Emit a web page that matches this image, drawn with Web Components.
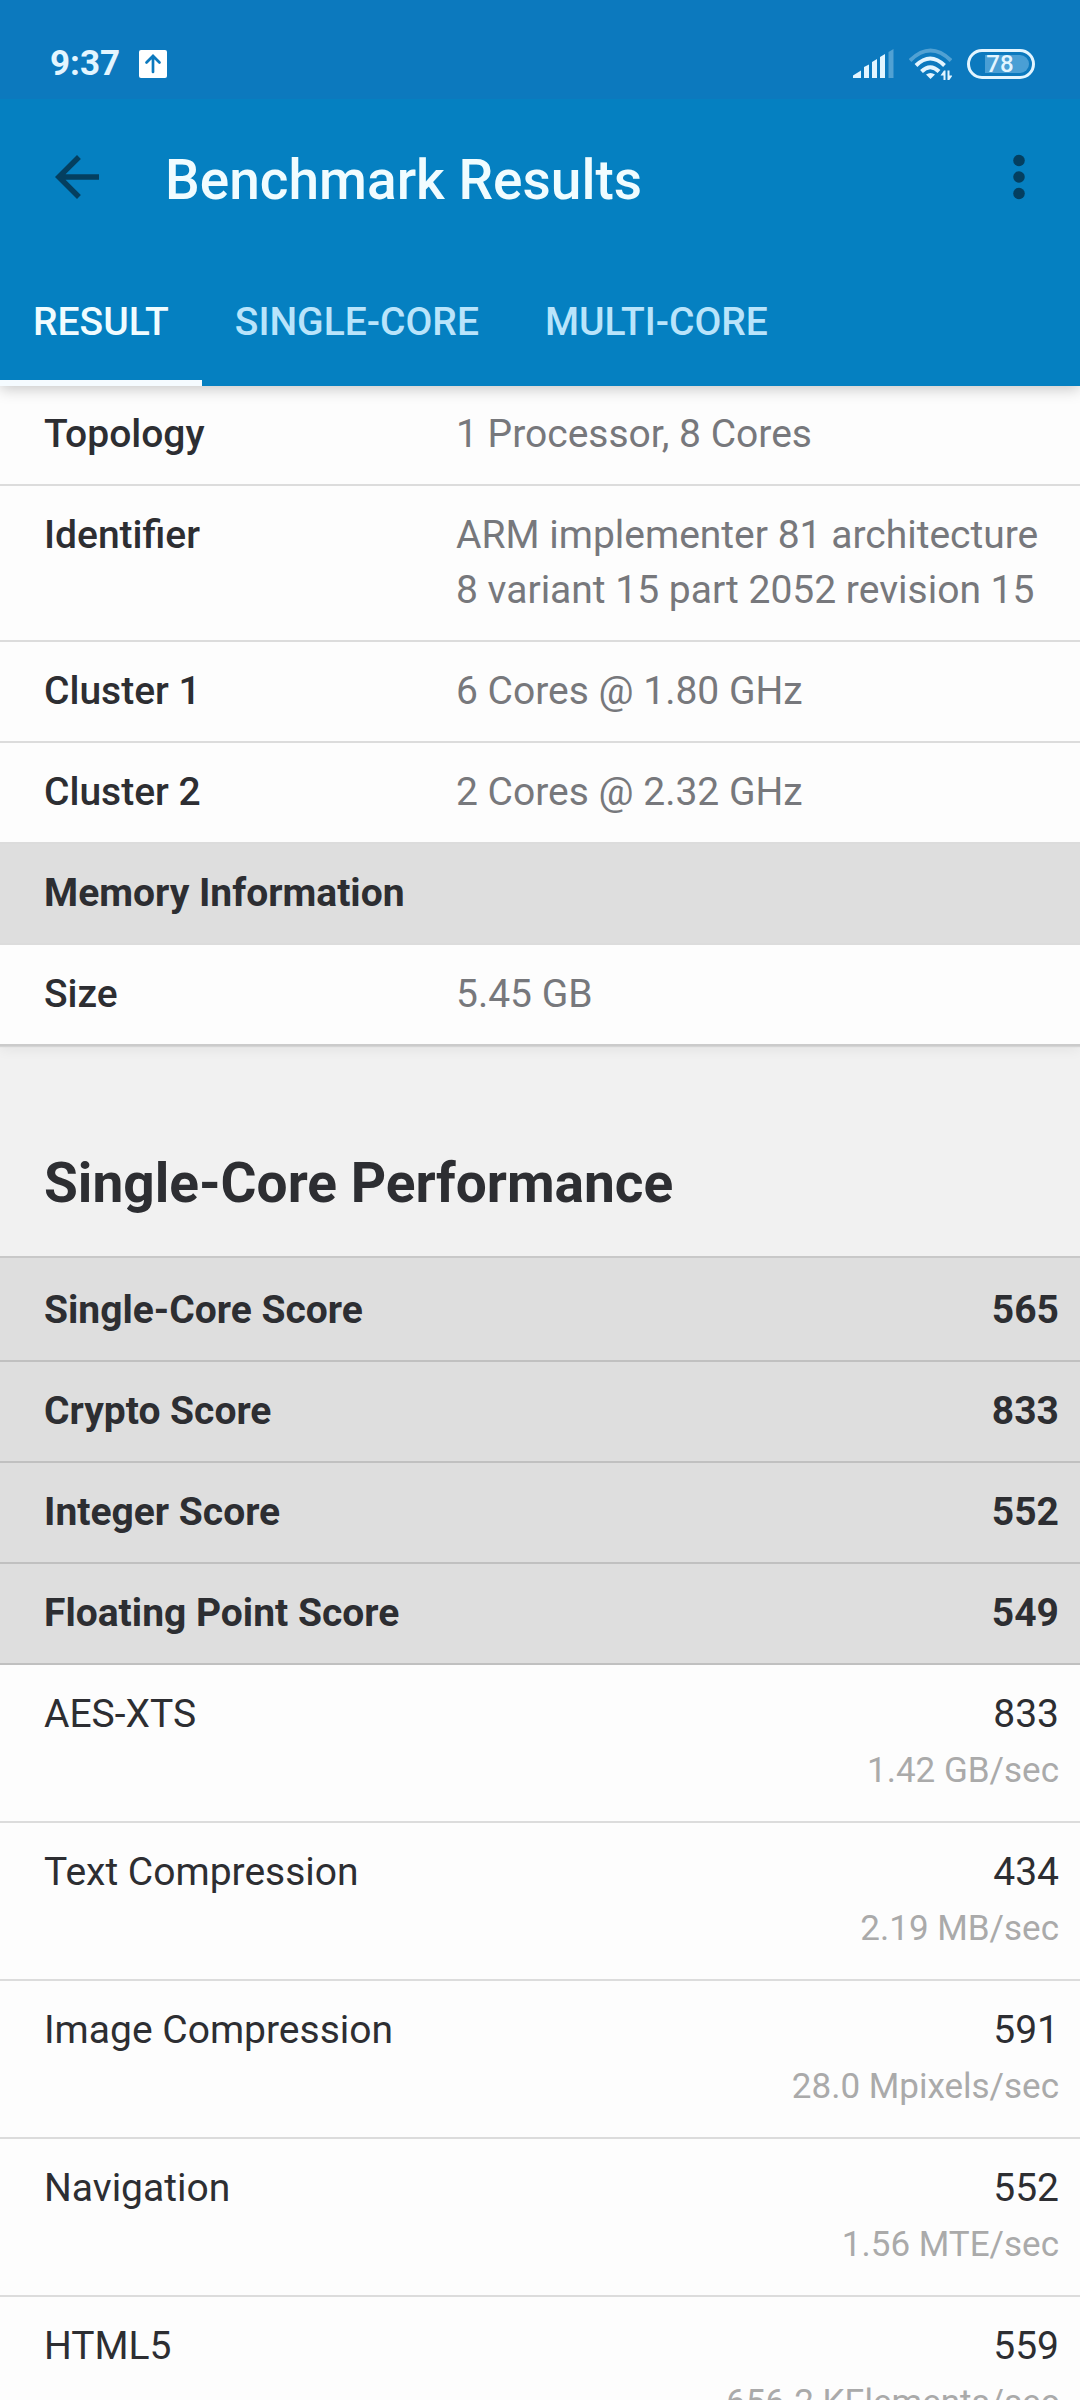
<!DOCTYPE html>
<html lang="en">
<head>
<meta charset="utf-8">
<meta name="viewport" content="width=device-width, initial-scale=1">
<title>Benchmark Results</title>
<style>
  html, body { margin: 0; height: 100%; }
  body { font-family: Roboto, "Noto Sans", sans-serif; background: #f1f1f1; color: #2d2e32; }
</style>
</head>
<body>
<result-screen></result-screen>
<script>
const define = (name, html, setup) => customElements.define(name, class extends HTMLElement {
  connectedCallback() {
    if (this.shadowRoot) return;
    const template = document.createElement('template');
    template.innerHTML = html;
    this.attachShadow({ mode: 'open' }).append(template.content.cloneNode(true));
    if (setup) setup(this, this.shadowRoot);
  }
});

define('status-bar', `
  <style>
    :host { display: flex; align-items: center; box-sizing: border-box; height: 99px;
      padding: 28px 45px 0 50px; background: #0c79be; color: #e3f5ff; }
    time { font-size: 35px; line-height: 40px; font-weight: 700; }
    svg { display: block; flex: none; }
    .upload { margin-left: 19px; }
    .system { display: flex; align-items: center; gap: 15px; margin-left: auto; }
    .battery { display: grid; place-items: center; }
    .battery > * { grid-area: 1 / 1; }
    .battery span { font-size: 24px; line-height: 30px; font-weight: 500; padding-right: 2px; }
  </style>
  <time>9:37</time>
  <svg class="upload" width="28" height="28" viewBox="0 0 28 28">
    <rect width="28" height="28" rx="2" fill="#fff"/>
    <path d="M14 22V7M7.500 12.500 14 6l6.500 6.500" fill="none" stroke="#0c79be" stroke-width="2.700" stroke-linecap="round"/>
  </svg>
  <div class="system">
    <svg width="41" height="30" viewBox="0 0 41 30" fill="currentColor">
      <path d="M0 29v-2.500L8 21.500V29zM11 29V18l5-2.500V29zM19 29V13l5-3v19zM27 29V8l5-3v24z"/>
      <path d="M35.500 29V3l5-3v29z" opacity=".32"/>
    </svg>
    <svg width="43" height="32" viewBox="0 0 43 32" fill="none" stroke="currentColor" stroke-width="4">
      <path d="M1 12.500Q21.500-7.500 42 12.500" stroke-width="4" opacity=".32"/>
      <path d="M7 17.500q14.250-14 28.500 0M12.500 23.500q8.750-8.500 17.500 0"/>
      <path d="M21.500 31l-4.500-4.500q4.500-3 9 0z" fill="currentColor" stroke="none"/>
      <path d="M31.500 27.500 35 22.500h1.500v10h-2v-5zM43.500 27.500 40 32.500h-1.500v-10h2v5z" fill="currentColor" stroke="none"/>
    </svg>
    <div class="battery">
      <svg width="68" height="30" viewBox="0 0 68 30">
        <path d="M18 6h35a9 9 0 0 1 0 18H18z" fill="#4a9fd5"/>
        <rect x="1.500" y="1.500" width="65" height="27" rx="13.500" fill="none" stroke="currentColor" stroke-width="3"/>
      </svg>
      <span>78</span>
    </div>
  </div>`);

define('app-bar', `
  <style>
    :host { display: flex; align-items: center; height: 155px; padding: 0 28px 0 44px;
      background: #0580c1; color: #f0fcff; }
    h1 { flex: 1; margin: 0 0 0 55px; padding-top: 6px; font-size: 55px; line-height: 64px; font-weight: 500; }
    button { flex: none; padding: 0; border: 0; background: none; color: #043f60; }
    svg { display: block; width: 66px; height: 66px; fill: currentColor; }
  </style>
  <button type="button" aria-label="Back">
    <svg viewBox="0 0 24 24"><path d="M20 11H7.830l5.590-5.590L12 4l-8 8 8 8 1.410-1.410L7.830 13H20z"/></svg>
  </button>
  <h1><slot></slot></h1>
  <button type="button" aria-label="More options">
    <svg viewBox="0 0 24 24"><circle cx="12" cy="6" r="2.100"/><circle cx="12" cy="12" r="2.100"/><circle cx="12" cy="18" r="2.100"/></svg>
  </button>`);

define('tab-bar', `
  <style>
    :host { display: flex; height: 132px; background: #0580c1; }
  </style>
  <slot></slot>`, host => host.setAttribute('role', 'tablist'));

define('tab-item', `
  <style>
    :host { display: flex; }
    button { box-sizing: border-box; padding: 10px 33px 0; border: 0; border-bottom: 6px solid transparent;
      background: none; color: #b9e4fb; font: 500 39px/46px Roboto, "Noto Sans", sans-serif; }
    :host([selected]) button { color: #f0fcff; border-color: #f5fbff; }
  </style>
  <button type="button" role="tab"><slot></slot></button>`, (host, root) =>
  root.querySelector('button').setAttribute('aria-selected', host.hasAttribute('selected')));

const tableStyle = `
  :host { display: block; background: #fdfdfd; }
  table { width: 100%; border-collapse: separate; border-spacing: 0; table-layout: fixed;
    font-size: 39px; line-height: 55px; }
  th, td { padding: 22px; border-bottom: 2px solid #dcdcdc; text-align: left;
    vertical-align: top; font-weight: 400; }
  th { padding-left: 44px; }`;

define('info-table', `
  <style>${tableStyle}
    :host { box-shadow: 0 1px 1px #d4d4d4, 0 4px 12px rgba(0, 0, 0, .06); }
    th { font-weight: 500; }
    td { padding-left: 24px; color: #77787c; }
    .section { background: #dedede; font-weight: 700; }
    tr:last-child > * { border-color: #cbcbcb; }
  </style>
  <table><colgroup><col style="width:40%"><col></colgroup><tbody></tbody></table>`, (host, root) => {
  root.querySelector('tbody').innerHTML = [
    ['Topology', '1 Processor, 8 Cores'],
    ['Identifier', 'ARM implementer 81 architecture 8 variant 15 part 2052 revision 15'],
    ['Cluster 1', '6 Cores @ 1.80 GHz'],
    ['Cluster 2', '2 Cores @ 2.32 GHz'],
    ['Memory Information'],
    ['Size', '5.45 GB']
  ].map(([name, value]) => value
    ? `<tr><th scope="row">${name}</th><td>${value}</td></tr>`
    : `<tr><th class="section" scope="colgroup" colspan="2">${name}</th></tr>`).join('');
});

define('score-table', `
  <style>${tableStyle}
    :host { border-top: 2px solid #c8c8c8; }
    td { padding-right: 21px; text-align: right; }
    .total > * { background: #dedede; border-color: #c0c0c0; font-weight: 700; }
    .total:first-child > * { padding-top: 25px; }
    small { display: block; color: #aaa; font-size: 35px; line-height: 57px; }
  </style>
  <table><colgroup><col style="width:50%"><col></colgroup><tbody></tbody></table>`, (host, root) => {
  root.querySelector('tbody').innerHTML = [
    ['Single-Core Score', 565],
    ['Crypto Score', 833],
    ['Integer Score', 552],
    ['Floating Point Score', 549],
    ['AES-XTS', 833, '1.42 GB/sec'],
    ['Text Compression', 434, '2.19 MB/sec'],
    ['Image Compression', 591, '28.0 Mpixels/sec'],
    ['Navigation', 552, '1.56 MTE/sec'],
    ['HTML5', 559, '656.2 KElements/sec']
  ].map(([name, score, rate]) => rate
    ? `<tr><th scope="row">${name}</th><td>${score}<small>${rate}</small></td></tr>`
    : `<tr class="total"><th scope="row">${name}</th><td>${score}</td></tr>`).join('');
});

define('result-screen', `
  <style>
    :host { display: flex; flex-direction: column; height: 100vh; overflow: hidden; }
    header { flex: none; z-index: 1; box-shadow: 0 3px 14px rgba(0, 0, 0, .22); }
    main { flex: 1; min-height: 0; overflow: hidden; margin-top: -1px; }
    h2 { margin: 0; padding: 105px 44px 41px; font-size: 55px; line-height: 64px; font-weight: 700; }
  </style>
  <header>
    <status-bar></status-bar>
    <app-bar>Benchmark Results</app-bar>
    <tab-bar>
      <tab-item selected>RESULT</tab-item>
      <tab-item>SINGLE-CORE</tab-item>
      <tab-item>MULTI-CORE</tab-item>
    </tab-bar>
  </header>
  <main>
    <info-table></info-table>
    <h2>Single-Core Performance</h2>
    <score-table></score-table>
  </main>`);
</script>
</body>
</html>
